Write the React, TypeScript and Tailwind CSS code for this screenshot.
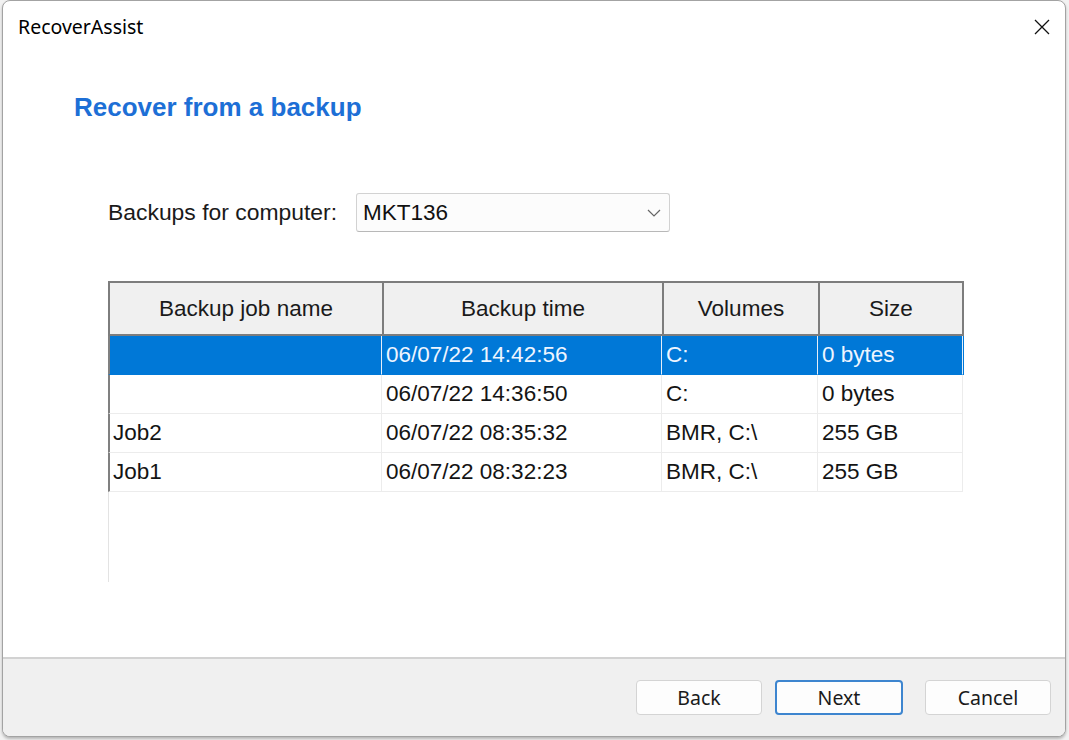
import React from "react";

const rows = [
  { name: "", time: "06/07/22 14:42:56", vol: "C:", size: "0 bytes", sel: true },
  { name: "", time: "06/07/22 14:36:50", vol: "C:", size: "0 bytes", sel: false },
  { name: "Job2", time: "06/07/22 08:35:32", vol: "BMR, C:\\", size: "255 GB", sel: false },
  { name: "Job1", time: "06/07/22 08:32:23", vol: "BMR, C:\\", size: "255 GB", sel: false },
];

const ui = { fontFamily: '"Noto Sans", "Open Sans", sans-serif' };
const arial = { fontFamily: '"Liberation Sans", Arial, sans-serif' };

export default function App() {
  return (
    <div className="w-[1069px] h-[740px] bg-[#f2f2f2] pl-[2px] overflow-hidden">
      <div className="w-[1064px] h-[737px] rounded-[8px] border border-[#a3a3a3] bg-white flex flex-col overflow-hidden shadow-[0_2px_3px_rgba(0,0,0,0.25)]">
        {/* title bar */}
        <div className="h-[52px] flex items-center justify-between pl-[15px] pr-[15px]">
          <span className="text-[19.5px] text-black" style={ui}>RecoverAssist</span>
          <svg width="16" height="16" viewBox="0 0 16 16">
            <path d="M1 1 L15 15 M15 1 L1 15" stroke="#111" strokeWidth="1.3" fill="none" />
          </svg>
        </div>

        {/* content */}
        <div className="flex-1 flex flex-col">
          <div className="mt-[38px] pl-[71px] h-[32px] flex items-center">
            <h1 className="text-[26px] font-bold text-[#1d6fd6]" style={arial}>Recover from a backup</h1>
          </div>

          <div className="mt-[70px] pl-[105px] flex items-center" style={arial}>
            <span className="text-[22.9px] text-[#1a1a1a]">Backups for computer:</span>
            <div className="ml-[19px] w-[314px] h-[39px] rounded-[3px] border border-[#d2d2d2] border-b-[#b8b8b8] bg-[#fcfcfc] flex items-center justify-between pl-[6px] pr-[8px]">
              <span className="text-[22.5px] text-[#111]">MKT136</span>
              <svg width="14" height="8" viewBox="0 0 14 8">
                <path d="M1 1 L7 7 L13 1" stroke="#666" strokeWidth="1.2" fill="none" />
              </svg>
            </div>
          </div>

          {/* table */}
          <div className="mt-[49px] ml-[105px] w-[856px] h-[301px] flex flex-col" style={arial}>
            <div className="grid grid-cols-[274px_280px_156px_146px] h-[55px] bg-[#f0f0f0]">
              {["Backup job name", "Backup time", "Volumes", "Size"].map((h, i) => (
                <div
                  key={h}
                  className={`flex items-center justify-center text-[22.5px] text-[#1a1a1a] border-t-2 border-b-2 border-l-2 border-[#7d7d7d] ${i === 3 ? "border-r-2" : ""}`}
                >
                  {h}
                </div>
              ))}
            </div>
            {rows.map((r, idx) => (
              <div
                key={idx}
                className={`grid grid-cols-[274px_280px_156px_145px] h-[39px] ${r.sel ? "bg-[#0078d7] text-[#eef5ff]" : "bg-white text-[#141414]"}`}
              >
                {[r.name, r.time, r.vol, r.size].map((c, i) => (
                  <div
                    key={i}
                    className={`flex items-center text-[22.5px] border-b ${r.sel ? "border-b-[#0078d7] border-r-[#e6eef8]" : "border-b-[#ececec] border-r-[#ececec]"} border-r ${i === 0 ? "pl-[3px] border-l-2 border-l-[#808080]" : "pl-[4px]"}`}
                  >
                    {c}
                  </div>
                ))}
              </div>
            ))}
            <div className="flex-1 border-l border-[#e3e3e3]" />
          </div>
        </div>

        {/* footer */}
        <div className="h-[79px] border-t-2 border-[#d2d2d2] bg-[#f0f0f0] flex justify-end pt-[21px] pr-[14px]" style={ui}>
          <button className="w-[126px] h-[35px] rounded-[4px] border border-[#d4d4d4] bg-[#fdfdfd] text-[19.5px] text-[#1a1a1a]">Back</button>
          <button className="ml-[13px] w-[128px] h-[35px] rounded-[4px] border-2 border-[#3d85cf] bg-[#fdfdfd] text-[19.5px] text-[#1a1a1a]">Next</button>
          <button className="ml-[22px] w-[126px] h-[35px] rounded-[4px] border border-[#d4d4d4] bg-[#fdfdfd] text-[19.5px] text-[#1a1a1a]">Cancel</button>
        </div>
      </div>
    </div>
  );
}
